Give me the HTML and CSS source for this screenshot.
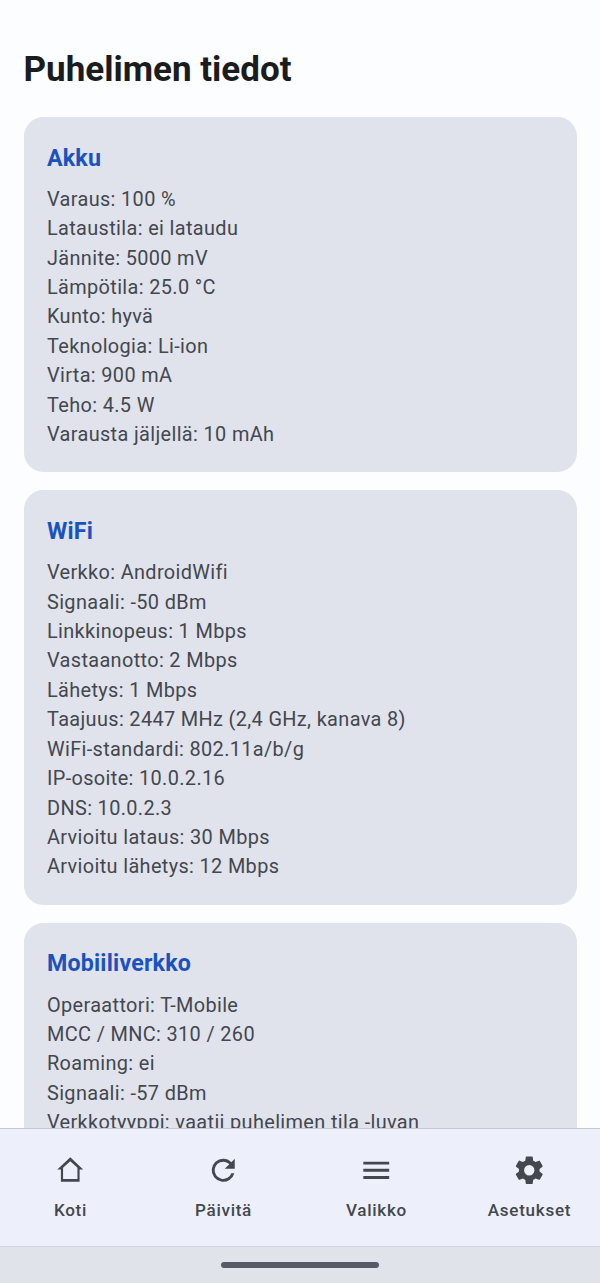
FILE: index.html
```html
<!DOCTYPE html>
<html lang="fi">
<head>
<meta charset="utf-8">
<title>Puhelimen tiedot</title>
<link rel="stylesheet" href="styles.css">
</head>
<body>
<div class="app">
  <main class="content">
    <h1 class="title">Puhelimen tiedot</h1>
    <section class="card">
      <h2 class="card-title">Akku</h2>
      <p class="line">Varaus: 100 %</p>
      <p class="line">Lataustila: ei lataudu</p>
      <p class="line">Jännite: 5000 mV</p>
      <p class="line">Lämpötila: 25.0 °C</p>
      <p class="line">Kunto: hyvä</p>
      <p class="line">Teknologia: Li-ion</p>
      <p class="line">Virta: 900 mA</p>
      <p class="line">Teho: 4.5 W</p>
      <p class="line">Varausta jäljellä: 10 mAh</p>
    </section>
    <section class="card">
      <h2 class="card-title">WiFi</h2>
      <p class="line">Verkko: AndroidWifi</p>
      <p class="line">Signaali: -50 dBm</p>
      <p class="line">Linkkinopeus: 1 Mbps</p>
      <p class="line">Vastaanotto: 2 Mbps</p>
      <p class="line">Lähetys: 1 Mbps</p>
      <p class="line">Taajuus: 2447 MHz (2,4 GHz, kanava 8)</p>
      <p class="line">WiFi-standardi: 802.11a/b/g</p>
      <p class="line">IP-osoite: 10.0.2.16</p>
      <p class="line">DNS: 10.0.2.3</p>
      <p class="line">Arvioitu lataus: 30 Mbps</p>
      <p class="line">Arvioitu lähetys: 12 Mbps</p>
    </section>
    <section class="card">
      <h2 class="card-title">Mobiiliverkko</h2>
      <p class="line">Operaattori: T-Mobile</p>
      <p class="line">MCC / MNC: 310 / 260</p>
      <p class="line">Roaming: ei</p>
      <p class="line">Signaali: -57 dBm</p>
      <p class="line">Verkkotyyppi: vaatii puhelimen tila -luvan</p>
    </section>
  </main>
  <nav class="nav">
    <div class="nav-item">
      <svg class="nav-icon" viewBox="0 0 24 24"><path d="M12 5.69l5 4.5V18H7v-7.81l5-4.5M12 3L3 11.5h2.5V20h13v-8.5H21L12 3z"/></svg>
      <span class="nav-label">Koti</span>
    </div>
    <div class="nav-item">
      <svg class="nav-icon" viewBox="0 0 24 24"><path d="M17.65 6.35A7.96 7.96 0 0 0 12 4a8 8 0 1 0 7.73 10h-2.08A6 6 0 1 1 12 6c1.66 0 3.14.69 4.22 1.78L13 11h7V4l-2.35 2.35z"/></svg>
      <span class="nav-label">Päivitä</span>
    </div>
    <div class="nav-item">
      <svg class="nav-icon" viewBox="0 0 24 24"><path d="M3 18h18v-2H3v2zm0-5h18v-2H3v2zm0-7v2h18V6H3z"/></svg>
      <span class="nav-label">Valikko</span>
    </div>
    <div class="nav-item">
      <svg class="nav-icon" viewBox="0 0 24 24"><path d="M19.14 12.94c.04-.3.06-.61.06-.94 0-.32-.02-.64-.07-.94l2.03-1.58a.49.49 0 0 0 .12-.61l-1.92-3.32a.488.488 0 0 0-.59-.22l-2.39.96c-.5-.38-1.03-.7-1.62-.94l-.36-2.54a.484.484 0 0 0-.48-.41h-3.84c-.24 0-.43.17-.47.41l-.36 2.54c-.59.24-1.13.57-1.62.94l-2.39-.96c-.22-.08-.47 0-.59.22L2.74 8.87c-.12.21-.08.47.12.61l2.03 1.58c-.05.3-.09.63-.09.94s.02.64.07.94l-2.03 1.58a.49.49 0 0 0-.12.61l1.92 3.32c.12.22.37.29.59.22l2.39-.96c.5.38 1.03.7 1.62.94l.36 2.54c.05.24.24.41.48.41h3.84c.24 0 .44-.17.47-.41l.36-2.54c.59-.24 1.13-.56 1.62-.94l2.39.96c.22.08.47 0 .59-.22l1.92-3.32c.12-.22.07-.47-.12-.61l-2.01-1.58zM12 15.6A3.61 3.61 0 0 1 8.4 12 3.61 3.61 0 0 1 12 8.4a3.61 3.61 0 0 1 3.6 3.6 3.61 3.61 0 0 1-3.6 3.6z"/></svg>
      <span class="nav-label">Asetukset</span>
    </div>
  </nav>
  <div class="gesture"><span class="handle"></span></div>
</div>
</body>
</html>
```
FILE: styles.css
```css
* { box-sizing: border-box; }
html, body { margin: 0; padding: 0; }
body {
  background: #fcfdff;
  font-family: Roboto, "Liberation Sans", sans-serif;
}
.app {
  width: 600px;
  height: 1283px;
  display: flex;
  flex-direction: column;
  overflow: hidden;
}
.content {
  flex: 1 1 0;
  min-height: 0;
  overflow: hidden;
  padding: 47px 23.5px 0;
  display: flex;
  flex-direction: column;
  gap: 18px;
}
.title {
  margin: 0 0 7px;
  font-size: 35px;
  line-height: 45px;
  font-weight: 700;
  color: #1a1c1e;
}
.card {
  flex: none;
  background: #e0e2ec;
  border-radius: 19.6px;
  padding: 24.5px 23.5px 23px;
}
.card-title {
  margin: 0 0 10.3px;
  font-size: 23.2px;
  line-height: 33px;
  font-weight: 700;
  letter-spacing: 0.2px;
  color: #1a53bd;
}
.line {
  margin: 0;
  font-size: 19.9px;
  line-height: 29.4px;
  letter-spacing: 0.36px;
  color: #43474e;
}
.nav {
  flex: none;
  height: 119px;
  background: #edf0fa;
  border-top: 1px solid #c6c9d3;
  border-bottom: 1px solid #d2d5de;
  display: flex;
  justify-content: center;
}
.nav-item {
  flex: none;
  width: 153px;
  display: flex;
  flex-direction: column;
  align-items: center;
  padding-top: 24px;
}
.nav-icon {
  width: 34.5px;
  height: 34.5px;
  fill: #43474e;
}
.nav-label {
  margin-top: 11px;
  font-size: 17.1px;
  line-height: 23px;
  font-weight: 500;
  letter-spacing: 0.7px;
  color: #43474e;
}
.gesture {
  flex: none;
  height: 36px;
  background: #e0e3ea;
  display: flex;
  align-items: center;
  justify-content: center;
}
.handle {
  width: 158px;
  height: 6px;
  border-radius: 3px;
  background: #565a65;
}
```
